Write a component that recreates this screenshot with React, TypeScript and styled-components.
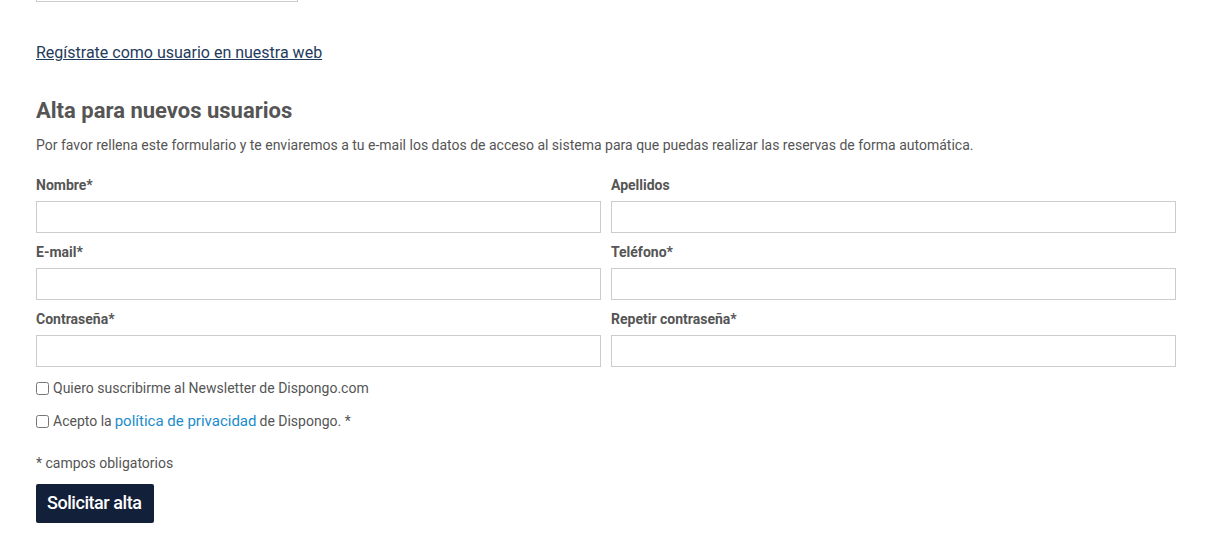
import React from "react";
import styled, { createGlobalStyle } from "styled-components";

const Global = createGlobalStyle`
  html, body { margin: 0; padding: 0; background: #fff; }
  body { font-family: Roboto, "Liberation Sans", sans-serif; color: #555; }
  * { box-sizing: border-box; }
`;

const Page = styled.div`
  width: 1140px;
  margin-left: 36px;
  display: flex;
  flex-direction: column;
`;

const TopField = styled.div`
  width: 262px;
  height: 2px;
  border: 1px solid #ccc;
  border-top: none;
`;

const RegisterLink = styled.a`
  margin-top: 39px;
  font-size: 16px;
  line-height: 24px;
  color: #1f3b5c;
  text-decoration: underline;
  align-self: flex-start;
`;

const Heading = styled.h2`
  margin: 33px 0 0;
  font-size: 22px;
  line-height: 26px;
  font-weight: 700;
  color: #555;
`;

const Intro = styled.p`
  margin: 11px 0 0;
  font-size: 14px;
  line-height: 20px;
  color: #555;
`;

const Grid = styled.div`
  margin-top: 20px;
  display: grid;
  grid-template-columns: 1fr 1fr;
  column-gap: 10px;
  row-gap: 9px;
`;

const Field = styled.div`
  display: flex;
  flex-direction: column;
  gap: 6px;
`;

const Label = styled.label`
  font-size: 14px;
  line-height: 20px;
  font-weight: 700;
  color: #555;
`;

const Input = styled.input`
  height: 32px;
  width: 100%;
  border: 1px solid #ccc;
  border-radius: 0;
  padding: 0 8px;
  font: inherit;
  outline: none;
`;

const CheckRow = styled.label<{ $top: number }>`
  margin-top: ${(p) => p.$top}px;
  display: flex;
  align-items: center;
  font-size: 14px;
  line-height: 20px;
  color: #555;
  input {
    margin: 0 4px 0 0;
    width: 13px;
    height: 13px;
  }
`;

const InlineLink = styled.a`
  color: #1a8ccc;
  font-size: 15px;
  text-decoration: none;
  margin: 0 3px;
`;

const Note = styled.p`
  margin: 22px 0 0;
  font-size: 14px;
  line-height: 20px;
  color: #555;
`;

const Submit = styled.button`
  margin-top: 11px;
  align-self: flex-start;
  height: 39px;
  padding: 0 12px 3px 11px;
  background: #13203a;
  color: #fff;
  border: none;
  border-radius: 2px;
  font-family: Roboto, "Liberation Sans", sans-serif;
  font-size: 18px;
  font-weight: 500;
  letter-spacing: -0.45px;
`;

const fields: string[] = [
  "Nombre*",
  "Apellidos",
  "E-mail*",
  "Teléfono*",
  "Contraseña*",
  "Repetir contraseña*",
];

export default function App() {
  return (
    <>
      <Global />
      <Page>
        <TopField />
        <RegisterLink href="#">Regístrate como usuario en nuestra web</RegisterLink>
        <Heading>Alta para nuevos usuarios</Heading>
        <Intro>
          Por favor rellena este formulario y te enviaremos a tu e-mail los datos de acceso al sistema para que puedas realizar las reservas de forma automática.
        </Intro>
        <Grid>
          {fields.map((l) => (
            <Field key={l}>
              <Label>{l}</Label>
              <Input type={l.startsWith("Contra") || l.startsWith("Repetir") ? "password" : "text"} />
            </Field>
          ))}
        </Grid>
        <CheckRow $top={11}>
          <input type="checkbox" />
          Quiero suscribirme al Newsletter de Dispongo.com
        </CheckRow>
        <CheckRow $top={13}>
          <input type="checkbox" />
          Acepto la<InlineLink href="#">política de privacidad</InlineLink>de Dispongo. *
        </CheckRow>
        <Note>* campos obligatorios</Note>
        <Submit>Solicitar alta</Submit>
      </Page>
    </>
  );
}
